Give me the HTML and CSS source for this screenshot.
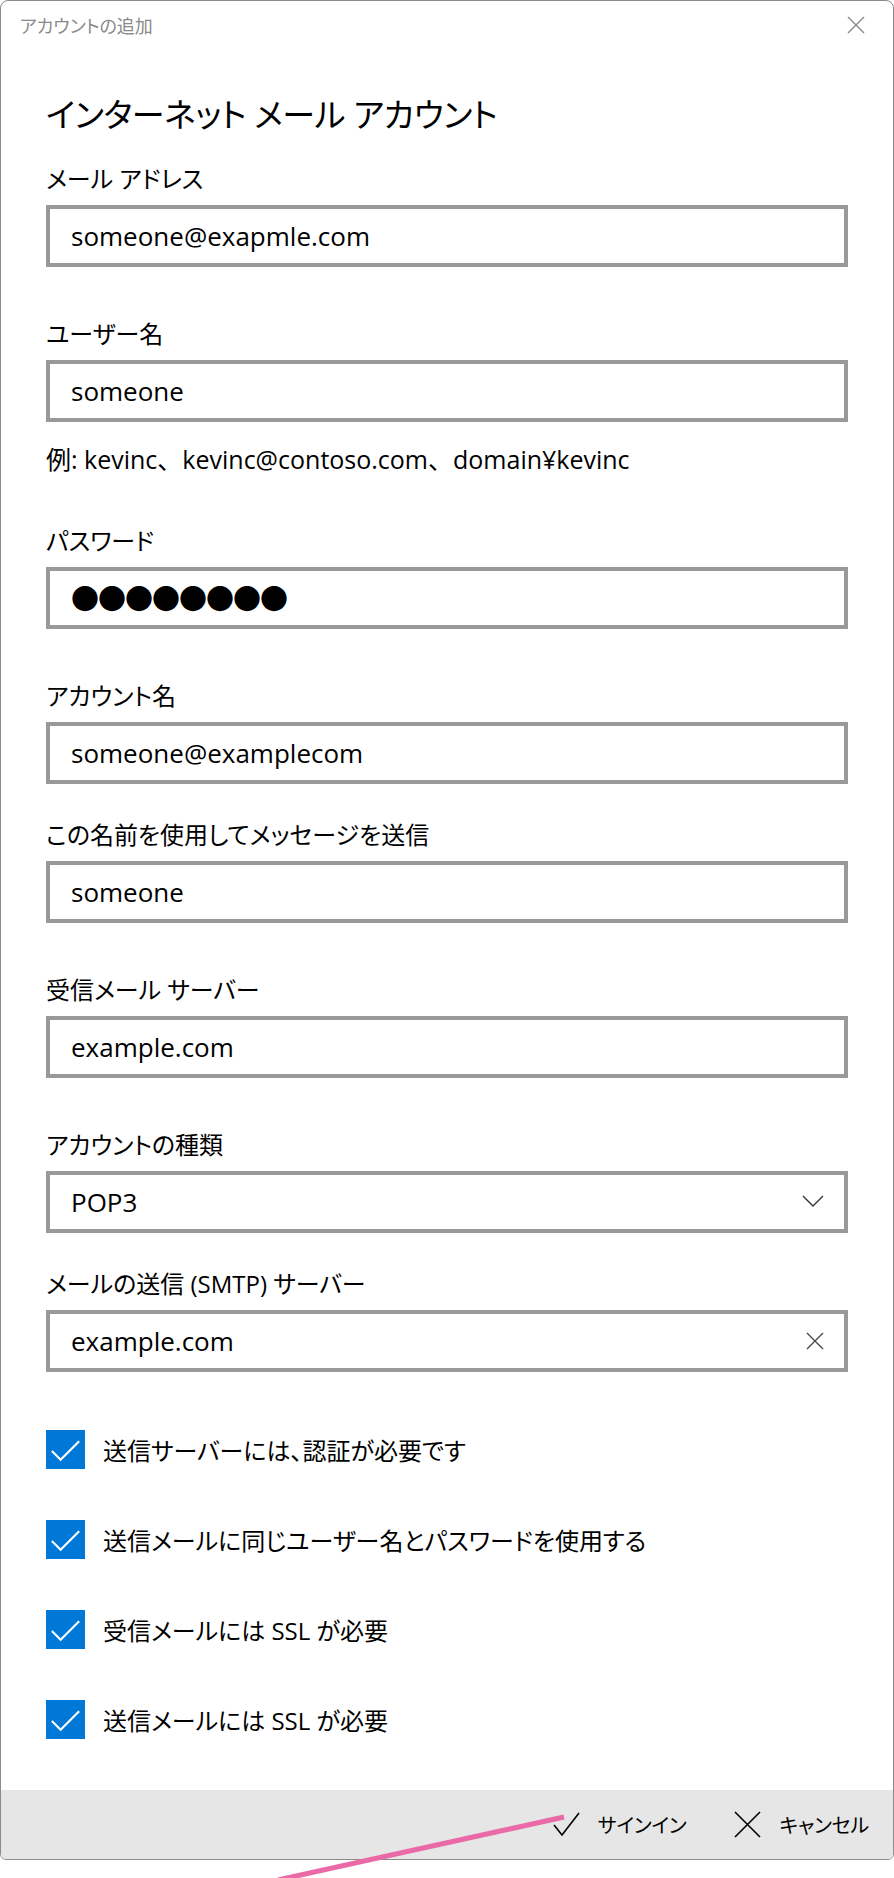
FILE: index.html
```html
<!DOCTYPE html>
<html lang="ja">
<head>
    <meta charset="UTF-8">
    <title>アカウントの追加</title>
    <link rel="stylesheet" href="styles.css">
</head>
<body>

    <div class="window">
        <div class="titlebar">
            <span class="title">アカウントの追加</span>
            <svg class="close" width="18" height="18" viewBox="0 0 18 18"><path d="M1 1 L17 17 M17 1 L1 17"/></svg>
        </div>

        <main class="content">
            <h1>インターネット メール アカウント</h1>

            <div class="field first">
                <label>メール アドレス</label>
                <div class="input">someone@exapmle.com</div>
            </div>

            <div class="field">
                <label>ユーザー名</label>
                <div class="input">someone</div>
            </div>
            <p class="hint">例: kevinc、kevinc@contoso.com、domain¥kevinc</p>

            <div class="field">
                <label>パスワード</label>
                <div class="input password">●●●●●●●●</div>
            </div>

            <div class="field">
                <label>アカウント名</label>
                <div class="input">someone@examplecom</div>
            </div>

            <div class="field tight">
                <label>この名前を使用してメッセージを送信</label>
                <div class="input">someone</div>
            </div>

            <div class="field">
                <label>受信メール サーバー</label>
                <div class="input">example.com</div>
            </div>

            <div class="field">
                <label>アカウントの種類</label>
                <div class="input select">
                    <span>POP3</span>
                    <svg width="22" height="13" viewBox="0 0 22 13"><path d="M1 1 L11 11 L21 1"/></svg>
                </div>
            </div>

            <div class="field tight">
                <label>メールの送信 (SMTP) サーバー</label>
                <div class="input clearable">
                    <span>example.com</span>
                    <svg width="18" height="18" viewBox="0 0 18 18"><path d="M1 1 L17 17 M17 1 L1 17"/></svg>
                </div>
            </div>

            <ul class="checks">
                <li><span class="box"><svg width="40" height="40" viewBox="0 0 40 40"><path d="M6 21 L15 30 L34 11"/></svg></span>送信サーバーには、認証が必要です</li>
                <li><span class="box"><svg width="40" height="40" viewBox="0 0 40 40"><path d="M6 21 L15 30 L34 11"/></svg></span>送信メールに同じユーザー名とパスワードを使用する</li>
                <li><span class="box"><svg width="40" height="40" viewBox="0 0 40 40"><path d="M6 21 L15 30 L34 11"/></svg></span>受信メールには SSL が必要</li>
                <li><span class="box"><svg width="40" height="40" viewBox="0 0 40 40"><path d="M6 21 L15 30 L34 11"/></svg></span>送信メールには SSL が必要</li>
            </ul>
        </main>

        <footer class="actions">
            <button class="action">
                <svg width="27" height="24" viewBox="0 0 27 24"><path d="M1 13 L9 23 L26 1"/></svg>
                サインイン
            </button>
            <button class="action">
                <svg width="27" height="27" viewBox="0 0 27 27"><path d="M1 1 L26 26 M26 1 L1 26"/></svg>
                キャンセル
            </button>
        </footer>
    </div>

    <!-- annotation pointer drawn over the screenshot -->
    <svg class="pointer" width="310" height="70" viewBox="0 0 310 70"><path d="M294 7 L8 70"/></svg>

</body>
</html>
```

FILE: styles.css
```css
* {
    margin: 0;
    padding: 0;
    box-sizing: border-box;
}

body {
    font-family: "Open Sans", "Noto Sans CJK JP", sans-serif;
    font-feature-settings: "palt";
    background-color: #fff;
    color: #000;
    width: 894px;
    height: 1878px;
    position: relative;
    overflow: hidden;
}

/* Window frame */
.window {
    width: 894px;
    height: 1860px;
    border: 1px solid #8c8c8c;
    border-radius: 8px 8px 6px 6px;
    display: flex;
    flex-direction: column;
    overflow: hidden;
}

.titlebar {
    height: 54px;
    display: flex;
    align-items: center;
    justify-content: space-between;
    padding: 0 28px 0 19px;
}

.title {
    font-size: 18px;
    color: #8a8a8a;
}

.close path {
    stroke: #8a8a8a;
    stroke-width: 1.4;
    fill: none;
}

/* Form */
.content {
    flex: 1;
    padding: 0 45px;
}

h1 {
    font-size: 33px;
    font-weight: 400;
    line-height: 40px;
    letter-spacing: -0.4px;
    margin-top: 45px;
}

.field {
    margin-top: 52px;
}

.field.first {
    margin-top: 29px;
}

.field.tight {
    margin-top: 36px;
}

label {
    display: block;
    font-size: 24px;
    line-height: 30px;
    margin-bottom: 11px;
}

.input {
    height: 62px;
    border: 4px solid #999;
    padding: 0 20px 0 21px;
    font-size: 26px;
    display: flex;
    align-items: center;
    justify-content: space-between;
}

.input.password {
    font-size: 28px;
    letter-spacing: -1px;
}

.select path {
    stroke: #333;
    stroke-width: 1.4;
    fill: none;
}

.clearable path {
    stroke: #444;
    stroke-width: 1.3;
    fill: none;
}

.hint {
    font-size: 25px;
    font-feature-settings: normal;
    line-height: 30px;
    margin-top: 22px;
}

/* Checkboxes */
.checks {
    list-style: none;
    margin-top: 58px;
}

.checks li {
    display: flex;
    align-items: center;
    height: 40px;
    margin-bottom: 50px;
    font-size: 24px;
}

.box {
    width: 39px;
    height: 39px;
    background-color: #0078d7;
    margin-right: 18px;
    display: flex;
}

.box path {
    stroke: #fff;
    stroke-width: 2.2;
    fill: none;
}

/* Bottom action bar */
.actions {
    height: 77px;
    background-color: #e6e6e6;
    display: flex;
    justify-content: flex-end;
    align-items: center;
    gap: 48px;
    padding-right: 24px;
}

.action {
    background: none;
    border: none;
    font-family: inherit;
    font-feature-settings: "palt";
    font-size: 20px;
    letter-spacing: -0.2px;
    color: #000;
    display: flex;
    align-items: center;
    gap: 18px;
}

.action path {
    stroke: #000;
    stroke-width: 1.6;
    fill: none;
}

.pointer {
    position: absolute;
    left: 270px;
    top: 1810px;
}

.pointer path {
    stroke: #e96aa6;
    stroke-width: 5;
    fill: none;
}
```
